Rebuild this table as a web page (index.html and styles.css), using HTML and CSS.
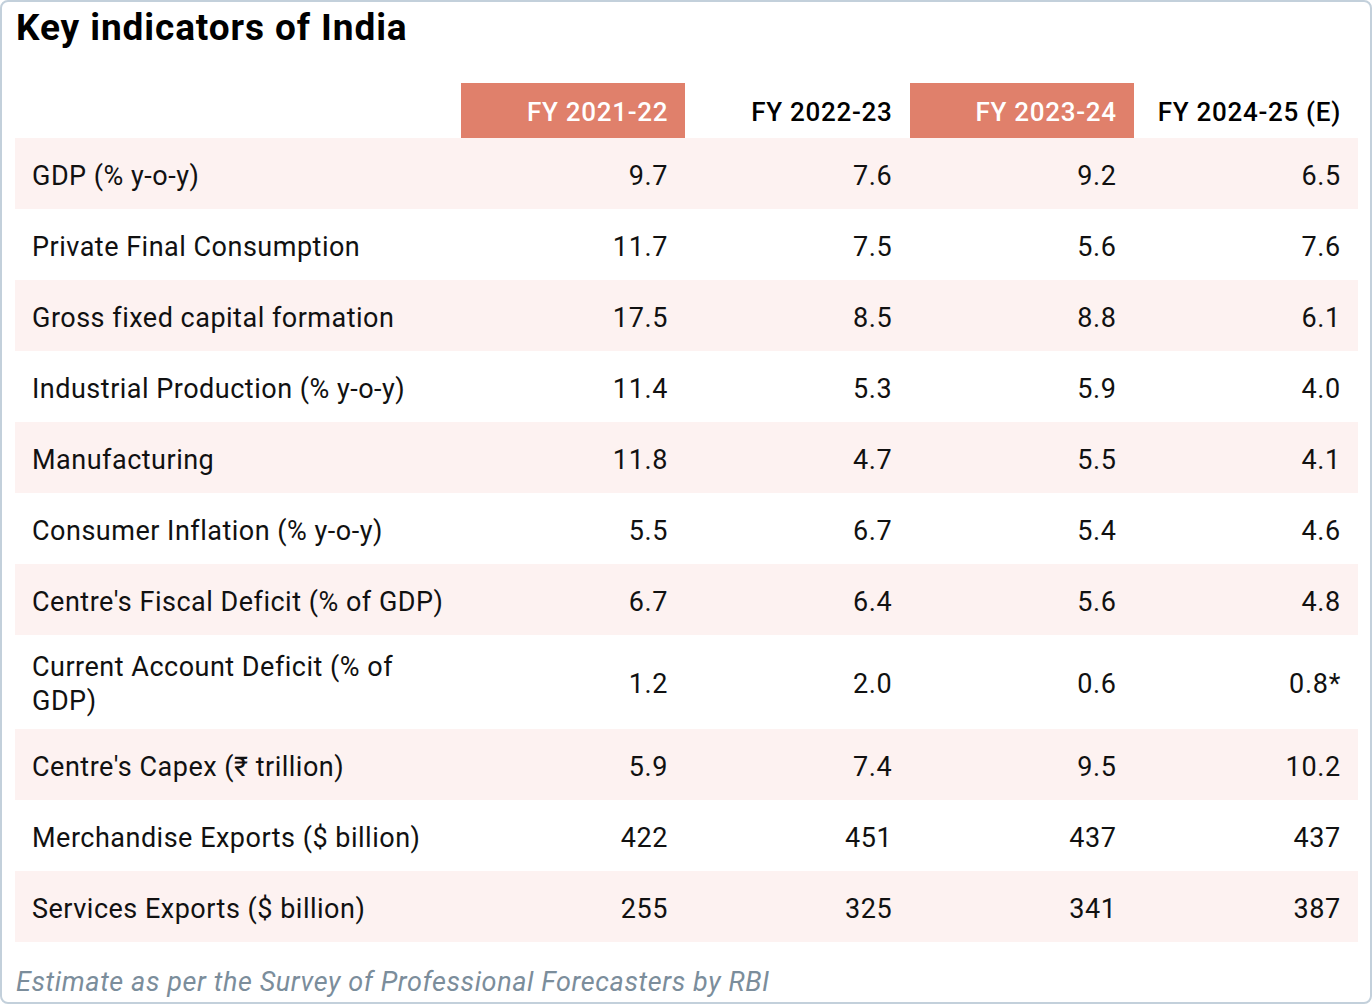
FILE: index.html
```html
<!DOCTYPE html>
<html lang="en">
<head>
<meta charset="utf-8">
<title>Key indicators of India</title>
<link rel="stylesheet" href="styles.css">
</head>
<body>
<div class="card">
  <h1 class="title">Key indicators of India</h1>
  <table class="tbl">
    <colgroup>
      <col class="c-label">
      <col class="c-num"><col class="c-num"><col class="c-num"><col class="c-num">
    </colgroup>
    <thead>
      <tr>
        <th class="blank"></th>
        <th class="hl">FY 2021-22</th>
        <th>FY 2022-23</th>
        <th class="hl">FY 2023-24</th>
        <th>FY 2024-25 (E)</th>
      </tr>
    </thead>
    <tbody>
      <tr><td>GDP (% y-o-y)</td><td>9.7</td><td>7.6</td><td>9.2</td><td>6.5</td></tr>
      <tr><td>Private Final Consumption</td><td>11.7</td><td>7.5</td><td>5.6</td><td>7.6</td></tr>
      <tr><td>Gross fixed capital formation</td><td>17.5</td><td>8.5</td><td>8.8</td><td>6.1</td></tr>
      <tr><td>Industrial Production (% y-o-y)</td><td>11.4</td><td>5.3</td><td>5.9</td><td>4.0</td></tr>
      <tr><td>Manufacturing</td><td>11.8</td><td>4.7</td><td>5.5</td><td>4.1</td></tr>
      <tr><td>Consumer Inflation (% y-o-y)</td><td>5.5</td><td>6.7</td><td>5.4</td><td>4.6</td></tr>
      <tr><td>Centre's Fiscal Deficit (% of GDP)</td><td>6.7</td><td>6.4</td><td>5.6</td><td>4.8</td></tr>
      <tr><td>Current Account Deficit (% of<br>GDP)</td><td>1.2</td><td>2.0</td><td>0.6</td><td>0.8*</td></tr>
      <tr><td>Centre's Capex (₹ trillion)</td><td>5.9</td><td>7.4</td><td>9.5</td><td>10.2</td></tr>
      <tr><td>Merchandise Exports ($ billion)</td><td>422</td><td>451</td><td>437</td><td>437</td></tr>
      <tr><td>Services Exports ($ billion)</td><td>255</td><td>325</td><td>341</td><td>387</td></tr>
    </tbody>
  </table>
  <p class="note">Estimate as per the Survey of Professional Forecasters by RBI</p>
</div>
</body>
</html>
```

FILE: styles.css
```css
html, body {
  margin: 0;
  padding: 0;
  background: #ffffff;
}

body {
  font-family: Roboto, "Liberation Sans", Arial, sans-serif;
  color: #111111;
}

.card {
  box-sizing: border-box;
  width: 1372px;
  height: 1004px;
  border: 2px solid #c3d0db;
  border-radius: 8px;
  padding: 6px 12px 0 13px;
}

.title {
  margin: 0 0 35px 1px;
  font-size: 37px;
  line-height: 40px;
  font-weight: 700;
  color: #000000;
  letter-spacing: 0.9px;
}

.tbl {
  width: 1343px;
  border-collapse: collapse;
  table-layout: fixed;
}

.c-label { width: 446px; }
.c-num { width: 224.25px; }

.tbl thead tr {
  height: 55px;
}

.tbl th {
  padding: 3px 17px 0 0;
  text-align: right;
  vertical-align: middle;
  font-size: 26px;
  line-height: 30px;
  font-weight: 500;
  letter-spacing: 0.7px;
  color: #000000;
  white-space: nowrap;
}

.tbl th.hl {
  background: #e0806b;
  color: #ffffff;
}

.tbl tbody tr {
  height: 71px;
}

.tbl tbody tr:nth-child(odd) {
  background: #fdf2f1;
}

.tbl td {
  padding: 15px 17px 11px 0;
  text-align: right;
  vertical-align: middle;
  font-size: 27px;
  line-height: 34px;
  letter-spacing: 0.7px;
  color: #111111;
  white-space: nowrap;
}

.tbl td:first-child {
  text-align: left;
  padding-left: 17px;
  padding-right: 0;
  letter-spacing: 0.5px;
}

.note {
  margin: 24px 0 0 1px;
  font-size: 27px;
  line-height: 32px;
  font-style: italic;
  letter-spacing: 0.6px;
  color: #7b8d9b;
}
```
